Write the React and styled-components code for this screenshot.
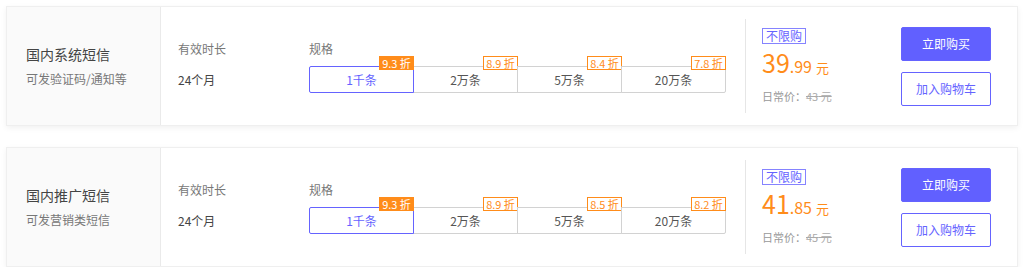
import React from 'react';
import styled, { createGlobalStyle } from 'styled-components';

const GlobalStyle = createGlobalStyle`
  body {
    margin: 0;
    background: #ffffff;
    font-family: "Noto Sans CJK SC", "Noto Sans", sans-serif;
  }
`;

const List = styled.div`
  display: flex;
  flex-direction: column;
  gap: 21px;
  padding: 6px 6px 0 6px;
`;

const Card = styled.div`
  display: flex;
  height: 120px;
  border: 1px solid #efefef;
  background: #fff;
  box-shadow: 0 2px 6px rgba(0, 0, 0, 0.06);
  box-sizing: border-box;
`;

const Side = styled.div`
  width: 154px;
  flex-shrink: 0;
  background: #fafafa;
  border-right: 1px solid #eaeaea;
  padding-left: 19px;
  box-sizing: border-box;
  display: flex;
  flex-direction: column;
  justify-content: center;
  gap: 6px;
`;

const Title = styled.div`
  font-size: 14px;
  color: #444;
  line-height: 20px;
`;

const Sub = styled.div`
  font-size: 12px;
  color: #777;
  line-height: 18px;
`;

const Body = styled.div`
  display: flex;
  align-items: center;
  padding-left: 17px;
`;

const Field = styled.div`
  display: flex;
  flex-direction: column;
  gap: 9px;
  width: ${(p) => p.width}px;
`;

const Label = styled.div`
  font-size: 12px;
  color: #777;
  line-height: 17px;
`;

const Value = styled.div`
  font-size: 12px;
  color: #444;
  height: 27px;
  line-height: 27px;
`;

const Options = styled.div`
  display: flex;
`;

const Option = styled.div`
  position: relative;
  width: 105px;
  height: 27px;
  box-sizing: border-box;
  margin-left: -1px;
  border: 1px solid ${(p) => (p.active ? '#6563ff' : '#d2d2d2')};
  border-radius: ${(p) => (p.first ? '2px 0 0 2px' : p.last ? '0 2px 2px 0' : '0')};
  z-index: ${(p) => (p.active ? 1 : 0)};
  font-size: 12px;
  line-height: 25px;
  text-align: center;
  color: ${(p) => (p.active ? '#6563ff' : '#555')};
  background: #fff;
  &:first-child {
    margin-left: 0;
  }
`;

const Badge = styled.span`
  position: absolute;
  top: -11px;
  right: -1px;
  height: 14px;
  width: 35px;
  box-sizing: border-box;
  font-size: 11px;
  line-height: 12px;
  text-align: center;
  white-space: nowrap;
  border: 1px solid #ff8c1a;
  background: ${(p) => (p.filled ? '#ff8c1a' : '#fff')};
  color: ${(p) => (p.filled ? '#fff' : '#ff8c1a')};
  z-index: 2;
`;

const Divider = styled.div`
  width: 1px;
  height: 94px;
  background: #e6e6e6;
  margin-left: 18px;
`;

const Price = styled.div`
  display: flex;
  flex-direction: column;
  align-items: flex-start;
  padding-left: 16px;
  width: 139px;
`;

const Tag = styled.span`
  font-size: 12px;
  color: #6563ff;
  border: 1px solid #8583ff;
  line-height: 14px;
  padding: 0 3px;
`;

const Amount = styled.div`
  color: #ff8c1a;
  margin-top: 3px;
  line-height: 30px;
  white-space: nowrap;
`;

const Int = styled.span`
  font-size: 25px;
`;

const Dec = styled.span`
  font-size: 16px;
`;

const Unit = styled.span`
  font-size: 13px;
  margin-left: 4px;
`;

const Origin = styled.div`
  font-size: 11px;
  color: #999;
  margin-top: 5px;
  s {
    color: #aaa;
  }
`;

const Actions = styled.div`
  display: flex;
  flex-direction: column;
  gap: 11px;
`;

const Button = styled.button`
  width: 90px;
  height: 34px;
  font-family: inherit;
  font-size: 12px;
  border-radius: 2px;
  cursor: pointer;
  border: 1px solid #6563ff;
  background: ${(p) => (p.primary ? '#6160ff' : '#fff')};
  color: ${(p) => (p.primary ? '#fff' : '#6563ff')};
`;

const products = [
  {
    title: '国内系统短信',
    sub: '可发验证码/通知等',
    badges: ['9.3', '8.9', '8.4', '7.8'],
    int: '39',
    dec: '.99',
    origin: '43',
  },
  {
    title: '国内推广短信',
    sub: '可发营销类短信',
    badges: ['9.3', '8.9', '8.5', '8.2'],
    int: '41',
    dec: '.85',
    origin: '45',
  },
];

const specs = ['1千条', '2万条', '5万条', '20万条'];

export default function App() {
  return (
    <>
      <GlobalStyle />
      <List>
        {products.map((p) => (
          <Card key={p.title}>
            <Side>
              <Title>{p.title}</Title>
              <Sub>{p.sub}</Sub>
            </Side>
            <Body>
              <Field width={131}>
                <Label>有效时长</Label>
                <Value>24个月</Value>
              </Field>
              <Field width={418}>
                <Label>规格</Label>
                <Options>
                  {specs.map((s, i) => (
                    <Option key={s} active={i === 0} first={i === 0} last={i === specs.length - 1}>
                      {s}
                      <Badge filled={i === 0}>{p.badges[i]} 折</Badge>
                    </Option>
                  ))}
                </Options>
              </Field>
              <Divider />
              <Price>
                <Tag>不限购</Tag>
                <Amount>
                  <Int>{p.int}</Int>
                  <Dec>{p.dec}</Dec>
                  <Unit>元</Unit>
                </Amount>
                <Origin>
                  日常价：<s>{p.origin} 元</s>
                </Origin>
              </Price>
              <Actions>
                <Button primary>立即购买</Button>
                <Button>加入购物车</Button>
              </Actions>
            </Body>
          </Card>
        ))}
      </List>
    </>
  );
}
